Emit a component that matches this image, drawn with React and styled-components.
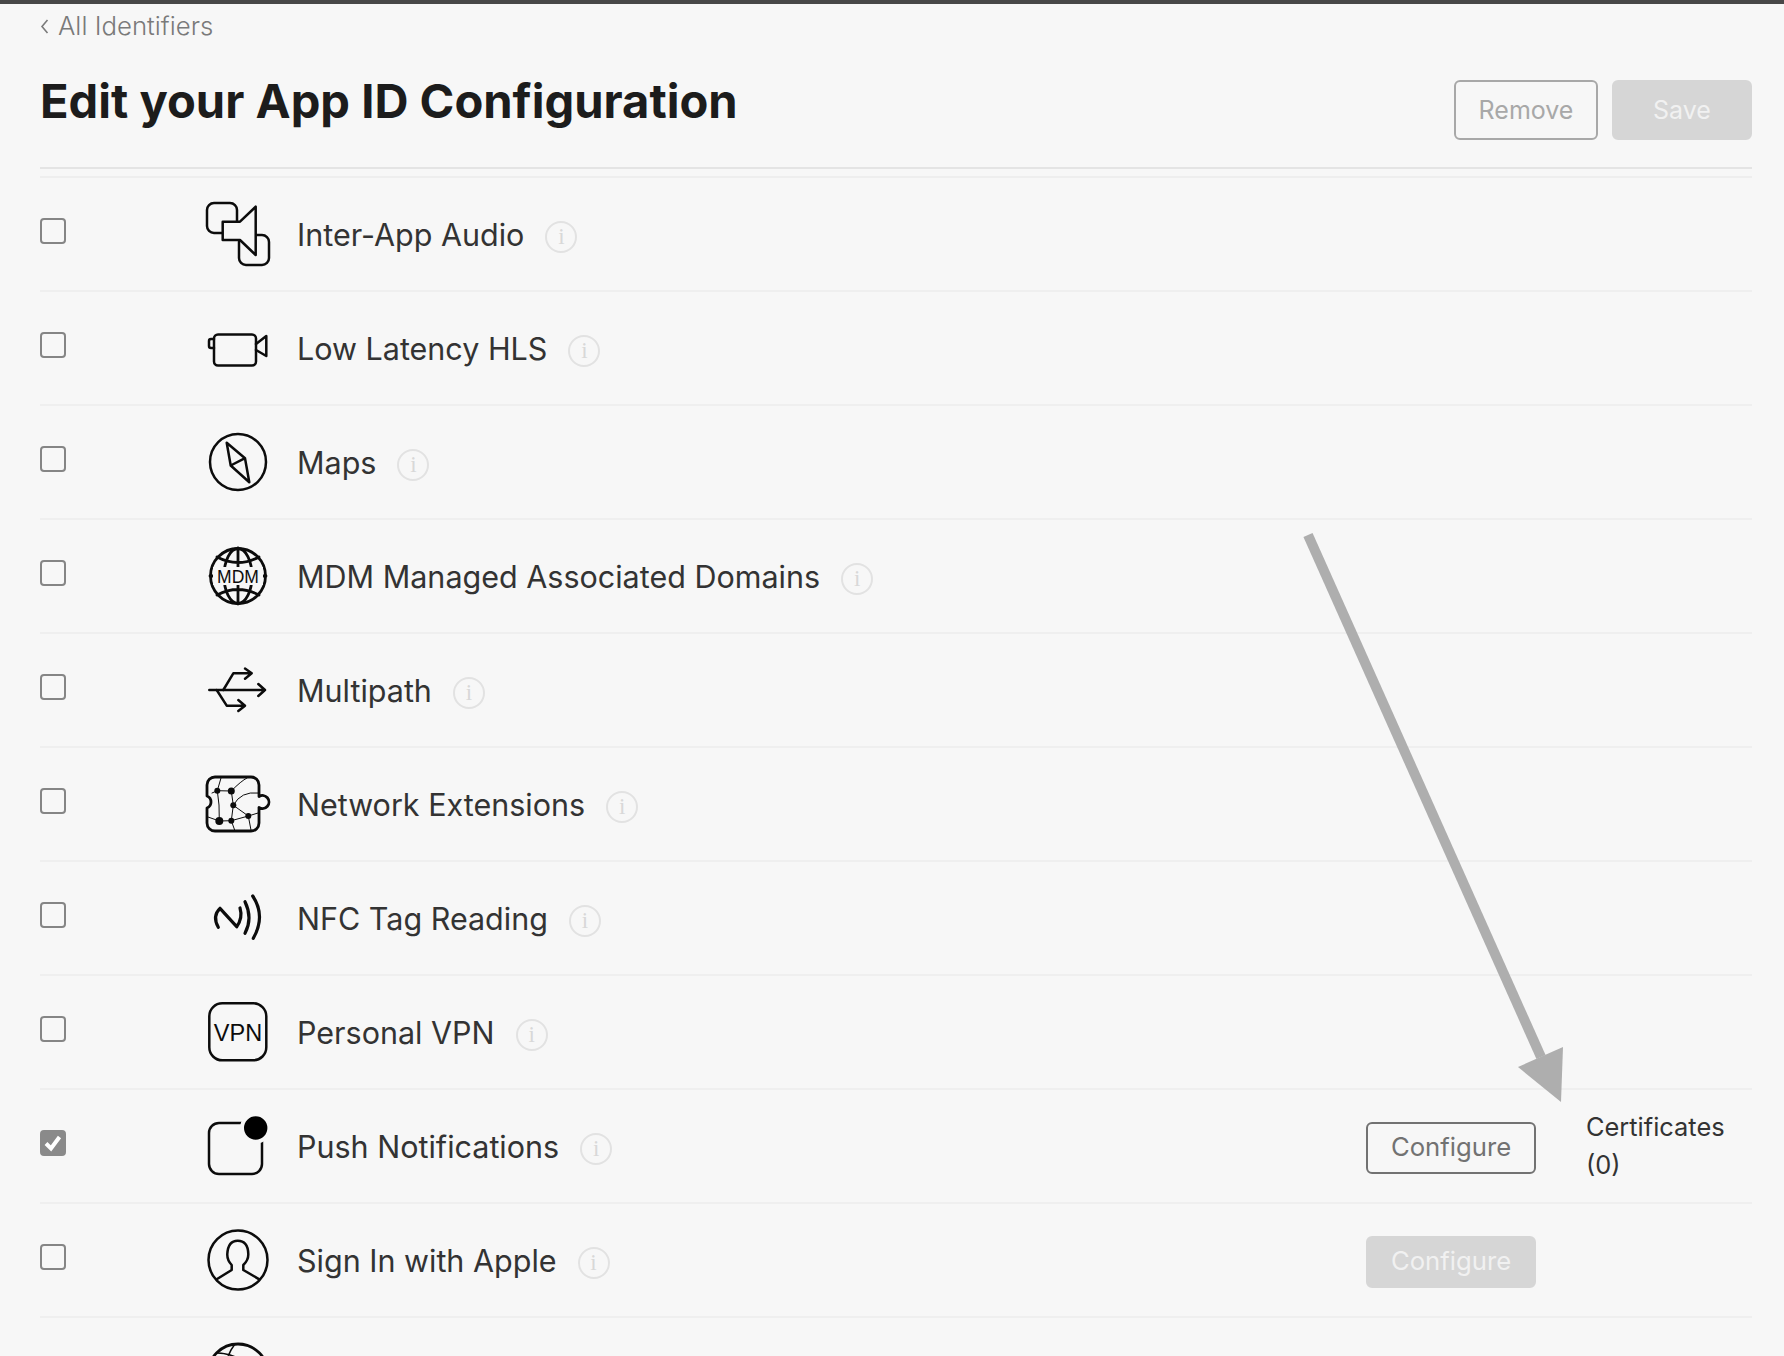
import React from "react";
import styled, { createGlobalStyle } from "styled-components";

const BG = "#f7f7f7";

const GlobalStyle = createGlobalStyle`
    html, body {
        margin: 0;
        padding: 0;
        background: ${BG};
        font-family: Inter, "Liberation Sans", sans-serif;
    }
`;

const Page = styled.div`
    position: relative;
    width: 1784px;
    height: 1356px;
    overflow: hidden;
    background: ${BG};
    border-top: 4px solid #484848;
    box-sizing: border-box;
    padding: 0 32px 0 40px;
`;

const BackLink = styled.a`
    display: flex;
    align-items: center;
    gap: 9px;
    height: 43px;
    color: #7a7a7a;
    font-size: 25.8px;
    font-weight: 300;
`;

const TitleBar = styled.div`
    display: flex;
    justify-content: space-between;
    align-items: flex-start;
    height: 122px;
    border-bottom: 2px solid #e4e4e4;
    box-sizing: border-box;
`;

const Title = styled.h1`
    margin: 26px 0 0;
    font-size: 47.1px;
    line-height: 56px;
    font-weight: 700;
    color: #1c1c1c;
`;

const TitleActions = styled.div`
    display: flex;
    gap: 14px;
    margin-top: 33px;
`;

const Button = styled.button`
    box-sizing: border-box;
    width: ${(p) => p.$width}px;
    height: ${(p) => p.$height}px;
    border-radius: 6px;
    border: 2px solid ${(p) => (p.$filled ? "#d6d6d6" : p.$tone)};
    background: ${(p) => (p.$filled ? "#d6d6d6" : "transparent")};
    color: ${(p) => (p.$filled ? "#f1f1f1" : p.$tone)};
    font-family: inherit;
    font-size: ${(p) => p.$size || 25}px;
    padding: 0;
`;

const ConfigureButton = styled(Button)`
    margin-top: 4px;
    padding-bottom: 4px;
`;

const List = styled.div`
    margin-top: 7px;
    border-top: 2px solid #eeeeee;
`;

const Row = styled.div`
    display: flex;
    align-items: center;
    height: 114px;
    box-sizing: border-box;
    border-bottom: 2px solid #efefef;
`;

const Check = styled.span`
    box-sizing: border-box;
    flex: none;
    display: flex;
    align-items: center;
    justify-content: center;
    width: 26px;
    height: 26px;
    margin-bottom: 6px;
    border-radius: 4px;
    border: 2px solid ${(p) => (p.$checked ? "#8a8a8a" : "#858585")};
    background: ${(p) => (p.$checked ? "#8a8a8a" : "transparent")};
`;

const IconBox = styled.svg`
    flex: none;
    width: 70px;
    height: 70px;
    margin: 0 24px 0 137px;
    fill: none;
    stroke: #0c0c0c;
    stroke-width: 2.5;
    stroke-linejoin: round;
    stroke-linecap: round;
`;

const Label = styled.span`
    font-size: 30.5px;
    font-weight: 400;
    color: #333333;
`;

const Info = styled.span`
    box-sizing: border-box;
    flex: none;
    display: flex;
    align-items: center;
    justify-content: center;
    width: 32px;
    height: 32px;
    margin: 6px 0 0 21px;
    border: 2px solid #e2e2e2;
    border-radius: 50%;
    color: #d8d8d8;
    font-family: "Liberation Serif", serif;
    font-size: 23px;
`;

const RowActions = styled.div`
    display: flex;
    align-items: center;
    margin-left: auto;
`;

const Note = styled.div`
    width: 166px;
    margin-left: 50px;
    font-size: 25.4px;
    line-height: 38px;
    color: #333333;
`;

const Arrow = styled.svg`
    position: absolute;
    left: 0;
    top: -4px;
    width: 1784px;
    height: 1356px;
    pointer-events: none;
`;

const TextMark = styled.text`
    fill: #0c0c0c;
    stroke: none;
    font-family: "Liberation Sans", sans-serif;
    text-anchor: middle;
`;

const icons = {
    audio: (
        <>
            <rect x="4" y="4" width="30" height="30" rx="7" />
            <rect x="36" y="36" width="30" height="30" rx="7" />
            <path d="M19.7 22.7H37L52.7 7.7V56L37 41H19.7Z" fill={BG} />
        </>
    ),
    video: (
        <>
            <rect x="11" y="21.5" width="42" height="31" rx="4" />
            <path d="M11 26H8Q6 26 6 28V33Q6 35 8 35H11" />
            <path d="M53 31L63.3 23V43L53 37" />
        </>
    ),
    maps: (
        <>
            <circle cx="35" cy="35" r="28" />
            <path d="M23.7 15.8L42 31.2L46.3 55.2L27.7 38.5ZM27.7 38.5L42 31.2" />
        </>
    ),
    mdm: (
        <g strokeWidth="2.8">
            <circle cx="35" cy="35" r="27.5" />
            <ellipse cx="35" cy="35" rx="14" ry="27.5" />
            <path d="M35 7V63M14 16Q35 27 56 16M14 54Q35 43 56 54M7 35H10M60 35H63" />
            <rect x="10" y="26" width="50" height="18" fill={BG} stroke="none" />
            <TextMark x="35" y="41.5" fontSize="17.5">MDM</TextMark>
        </g>
    ),
    multipath: (
        <>
            <path d="M6.3 35H62M55.3 29L62 35L55.3 41" />
            <path d="M20.3 35L30.3 18.3H48.7M42 13.6L48.7 18.3L42 23.7" />
            <path d="M13.7 35L23.7 50.7H42M35.3 45L42 50.7L35.3 56" />
        </>
    ),
    network: (
        <>
            <path d="M12 8H48A8 8 0 0 1 56 16V27.5A6.5 6.5 0 1 1 56 38.5V54A8 8 0 0 1 48 62H12A8 8 0 0 1 4 54V39A6.5 6.5 0 0 0 4 27V16A8 8 0 0 1 12 8Z" strokeWidth="2.8" />
            <g strokeWidth="1">
                <path d="M9 24L14.3 21.7L28.3 22Q38 12 44 9M18 9L14.3 21.7L16 36L16.3 52L28.3 51.7L45.3 47L55 44" />
                <path d="M28.3 22L30.3 36.3L45.3 47M28.3 51.7L30.3 36.3Q38 22 55 24M16.3 52L5 48M28.3 51.7L32 62M45.3 47L48 61" />
            </g>
            <g fill="#0c0c0c" stroke="none">
                <circle cx="14.3" cy="21.7" r="3" />
                <circle cx="28.3" cy="22" r="3.5" />
                <circle cx="30.3" cy="36.3" r="3" />
                <circle cx="45.3" cy="47" r="3" />
                <circle cx="16.3" cy="52" r="4" />
                <circle cx="28.3" cy="51.7" r="3" />
            </g>
        </>
    ),
    nfc: (
        <g strokeWidth="3.2">
            <path d="M15.3 44.3Q9 33 17 25.3L33.7 43.7Q40 35 37 25" />
            <path d="M42 18.7Q50 35 42 50.3" />
            <path d="M49.7 13Q63 33 50.3 55.3" />
        </g>
    ),
    vpn: (
        <>
            <rect x="6.3" y="6.3" width="57" height="57" rx="13" />
            <TextMark x="35" y="43.5" fontSize="23.5">VPN</TextMark>
        </>
    ),
    push: (
        <>
            <rect x="6" y="12" width="53" height="51" rx="10" />
            <circle cx="52.7" cy="17" r="13.7" fill="#000" stroke={BG} strokeWidth="4" />
        </>
    ),
    apple: (
        <>
            <circle cx="35" cy="35" r="29.5" />
            <path d="M13.7 54.3L28.7 45V40Q24 35 24.3 29Q25 15.7 34.7 15.7Q45 15.7 45.3 29Q45.5 35 40.3 40V45L56.3 54.3" />
        </>
    ),
    globe: (
        <>
            <circle cx="35" cy="35" r="30" strokeWidth="2.8" />
            <path d="M32 5Q22 18 24 30M14 14Q28 14 44 24" strokeWidth="1.5" />
        </>
    ),
};

const features = [
    { name: "Inter-App Audio", icon: "audio" },
    { name: "Low Latency HLS", icon: "video" },
    { name: "Maps", icon: "maps" },
    { name: "MDM Managed Associated Domains", icon: "mdm" },
    { name: "Multipath", icon: "multipath" },
    { name: "Network Extensions", icon: "network" },
    { name: "NFC Tag Reading", icon: "nfc" },
    { name: "Personal VPN", icon: "vpn" },
    { name: "Push Notifications", icon: "push", checked: true, configure: "outline", note: "Certificates (0)" },
    { name: "Sign In with Apple", icon: "apple", configure: "disabled" },
    { icon: "globe" },
];

const App = () => (
    <>
        <GlobalStyle />
        <Page>
            <BackLink>
                <svg width="9" height="16" viewBox="0 0 9 16" fill="none" stroke="#7a7a7a" strokeWidth="1.6">
                    <path d="M7.5 2L2 8.5L7.5 15" />
                </svg>
                All Identifiers
            </BackLink>
            <TitleBar>
                <Title>Edit your App ID Configuration</Title>
                <TitleActions>
                    <Button $width={144} $height={60} $tone="#a8a8a8">Remove</Button>
                    <Button $width={140} $height={60} $filled>Save</Button>
                </TitleActions>
            </TitleBar>
            <List>
                {features.map((f) => (
                    <Row key={f.icon}>
                        <Check $checked={f.checked}>
                            {f.checked && (
                                <svg width="20" height="18" viewBox="0 0 20 18" fill="none" stroke="#fff" strokeWidth="4">
                                    <path d="M3 9.5L8 14.5L16.5 3" />
                                </svg>
                            )}
                        </Check>
                        <IconBox viewBox="0 0 70 70">{icons[f.icon]}</IconBox>
                        {f.name && <Label>{f.name}</Label>}
                        {f.name && <Info>i</Info>}
                        {f.configure && (
                            <RowActions>
                                <ConfigureButton $width={170} $height={52} $size={25.7} $tone="#727272" $filled={f.configure === "disabled"}>
                                    Configure
                                </ConfigureButton>
                                <Note>{f.note}</Note>
                            </RowActions>
                        )}
                    </Row>
                ))}
            </List>
            <Arrow viewBox="0 0 1784 1356">
                <path d="M1308 535L1541 1057" stroke="#aeaeae" strokeWidth="10" />
                <path d="M1563 1047L1518 1067L1561 1102Z" fill="#aeaeae" />
            </Arrow>
        </Page>
    </>
);

export default App;
